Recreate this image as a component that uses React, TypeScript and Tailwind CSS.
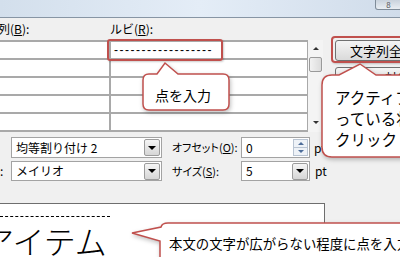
import React from 'react';

const RED = '#c0504d';

function DropButton() {
  return (
    <div className="flex h-[17px] w-[16px] items-center justify-center rounded-[2px] border border-[#9c9c9c] bg-gradient-to-b from-[#f5f5f5] to-[#d6d6d6]">
      <div className="h-0 w-0 border-x-[4px] border-t-[4px] border-x-transparent border-t-black" />
    </div>
  );
}

function Spinner() {
  return (
    <div className="flex h-[17px] w-[15px] flex-col">
      <div className="flex flex-1 items-center justify-center border border-b-0 border-[#b9c4d2] bg-[#eef2f7]">
        <div className="h-0 w-0 border-x-[3px] border-b-[3px] border-x-transparent border-b-[#4d6d9a]" />
      </div>
      <div className="flex flex-1 items-center justify-center border border-[#b9c4d2] bg-[#eef2f7]">
        <div className="h-0 w-0 border-x-[3px] border-t-[3px] border-x-transparent border-t-[#4d6d9a]" />
      </div>
    </div>
  );
}

function Field({ width, text, children }: { width: string; text: string; children: React.ReactNode }) {
  return (
    <div className={`flex h-full items-center justify-between border border-[#a3a3a3] bg-white pl-[4px] pr-[1px] ${width}`}>
      <span className="text-[12px] leading-none">{text}</span>
      {children}
    </div>
  );
}

export default function App() {
  const rows = [0, 1, 2, 3, 4];
  return (
    <div className="relative h-[257px] w-[400px] overflow-hidden bg-[#f0f0f0] font-['Noto_Sans_CJK_JP','Noto_Sans',sans-serif] text-black">
      {/* ── window chrome ─────────────────────────────── */}
      <div className="flex h-[18px] justify-end border-b border-[#8795a4] bg-gradient-to-r from-[#d3dfec] via-[#e4edf7] to-[#d0dcea]">
        <div className="mr-[-2px] flex h-[10px] w-[27px] items-end justify-center rounded-b-[3px] border border-t-0 border-[#7f8c99] bg-gradient-to-b from-[#c9d2dc] to-[#e9eef3] text-[8px] leading-none text-[#555]">
          8
        </div>
      </div>

      {/* ── column labels ─────────────────────────────── */}
      <div className="flex h-[22px] items-center text-[12px] leading-none">
        <span className="ml-[-26px] w-[136px] whitespace-nowrap">
          文字列(<span className="underline">B</span>):
        </span>
        <span className="whitespace-nowrap">
          ルビ(<span className="underline">R</span>):
        </span>
      </div>

      {/* ── text grid + buttons ──────────────────────── */}
      <div className="flex h-[92px]">
        <div className="flex w-[308px] flex-col border-t-2 border-r border-[#a9a9a9]">
          {rows.map((i) => (
            <div key={i} className="flex h-[18px] border-b-2 border-[#a9a9a9]">
              <div className="w-[109px] bg-white" />
              <div className="w-[2px] bg-[#a9a9a9]" />
              <div className="flex flex-1 items-center bg-white pl-[3px]">
                {i === 0 && (
                  <span className="font-['Liberation_Sans',sans-serif] text-[12px] leading-none tracking-[1.5px]">
                    ------------------
                  </span>
                )}
              </div>
            </div>
          ))}
        </div>
        {/* scrollbar */}
        <div className="flex w-[15px] flex-col items-center bg-[#f4f4f4]">
          <div className="mt-[7px] h-0 w-0 border-x-[3px] border-b-[3px] border-x-transparent border-b-[#333]" />
          <div className="mt-[7px] h-[15px] w-[13px] rounded-[2px] border border-[#9a9a9a] bg-gradient-to-r from-[#f2f2f2] to-[#dcdcdc]" />
          <div className="flex-1" />
          <div className="mb-[8px] h-0 w-0 border-x-[3px] border-t-[3px] border-x-transparent border-t-[#333]" />
        </div>
        {/* buttons */}
        <div className="flex min-w-0 flex-1 flex-col gap-[6px] pl-[12px]">
          <div className="flex h-[21px] w-[95px] shrink-0 items-center rounded-[3px] border border-[#707070] bg-gradient-to-b from-[#f4f4f4] to-[#dadada] pl-[14px] text-[13px] leading-none whitespace-nowrap">
            文字列全体
          </div>
          <div className="flex h-[21px] w-[95px] shrink-0 items-center justify-end rounded-[3px] border border-[#707070] bg-gradient-to-b from-[#f4f4f4] to-[#dadada] pr-[20px] text-[12px] leading-none whitespace-nowrap">
            対象
          </div>
        </div>
      </div>

      {/* ── option rows ──────────────────────────────── */}
      <div className="mt-[5px] flex h-[21px] items-center">
        <div className="w-[11px]" />
        <Field width="w-[151px]" text="均等割り付け 2">
          <DropButton />
        </Field>
        <span className="w-[79px] whitespace-nowrap pl-[10px] text-[11px] leading-none [font-feature-settings:'palt']">
          オフセット(<span className="underline">O</span>):
        </span>
        <Field width="w-[69px]" text="0">
          <Spinner />
        </Field>
        <span className="pl-[4px] text-[12px] leading-none">pt</span>
      </div>
      <div className="mt-[3px] flex h-[20px] items-center">
        <span className="w-[11px] text-[12px] leading-none">:</span>
        <Field width="w-[151px]" text="メイリオ">
          <DropButton />
        </Field>
        <span className="w-[79px] whitespace-nowrap pl-[10px] text-[11px] leading-none [font-feature-settings:'palt']">
          サイズ(<span className="underline">S</span>):
        </span>
        <Field width="w-[69px]" text="5">
          <DropButton />
        </Field>
        <span className="pl-[5px] text-[12px] leading-none">pt</span>
      </div>

      {/* ── preview ───────────────────────────────────── */}
      <div className="ml-[-1px] mt-[22px] h-[60px] w-[326px] overflow-hidden border-t border-r border-[#6e6e6e] bg-white">
        <div className="ml-[1px] mt-[12px] w-[110px] border-t border-dashed border-black" />
        <div className="ml-[-17px] mt-[7px] whitespace-nowrap text-[32px] font-light leading-none">アイテム</div>
      </div>

      {/* ── red highlights ───────────────────────────── */}
      <div className="absolute left-[107px] top-[39px] h-[22px] w-[116px] rounded-[3px] border-2 border-[#c0504d] shadow-[1px_1px_2px_rgba(0,0,0,0.2)]" />
      <div className="absolute left-[331px] top-[36px] h-[27px] w-[80px] rounded-[4px] border-2 border-[#c0504d] shadow-[1px_1px_2px_rgba(0,0,0,0.2)]" />

      {/* ── callout: 点を入力 ─────────────────────────── */}
      <div className="absolute left-[130px] top-[55px] h-[65px] w-[110px]">
        <svg width="110" height="65" className="absolute left-0 top-0 overflow-visible drop-shadow-[1px_2px_2px_rgba(0,0,0,0.25)]">
          <path
            d="M19 19 L27 19 L35 8 L48 19 L93 19 Q99 19 99 25 L99 49 Q99 55 93 55 L19 55 Q13 55 13 49 L13 25 Q13 19 19 19 Z"
            fill="#fff"
            stroke={RED}
            strokeWidth="1.5"
          />
        </svg>
        <div className="absolute left-[25px] top-[33px] whitespace-nowrap text-[14px] leading-none">点を入力</div>
      </div>

      {/* ── callout: アクティブ… ─────────────────────── */}
      <div className="absolute left-[310px] top-[55px] h-[110px] w-[160px]">
        <svg width="160" height="110" className="absolute left-0 top-0 overflow-visible drop-shadow-[1px_2px_2px_rgba(0,0,0,0.25)]">
          <path
            d="M22 20 L29 20 L50 9 L66 20 L160 20 L160 102 L22 102 Q12 102 12 92 L12 30 Q12 20 22 20 Z"
            fill="#fff"
            stroke={RED}
            strokeWidth="1.5"
          />
        </svg>
        <div className="absolute left-[25px] top-[32px] whitespace-nowrap text-[15.5px] leading-[21px]">
          <div>アクティブにな</div>
          <div>っている状態で</div>
          <div>クリック</div>
        </div>
      </div>

      {/* ── callout: 本文の文字… ─────────────────────── */}
      <div className="absolute left-[125px] top-[215px] h-[60px] w-[300px]">
        <svg width="300" height="60" className="absolute left-0 top-0 overflow-visible drop-shadow-[1px_2px_2px_rgba(0,0,0,0.25)]">
          <path
            d="M43 8 L300 8 L300 70 L35 70 L35 26 L7 18 L36 12 Q37 8 43 8 Z"
            fill="#fff"
            stroke={RED}
            strokeWidth="1.5"
          />
        </svg>
        <div className="absolute left-[44px] top-[22px] whitespace-nowrap text-[13.4px] leading-none">
          本文の文字が広がらない程度に点を入力
        </div>
      </div>
    </div>
  );
}
